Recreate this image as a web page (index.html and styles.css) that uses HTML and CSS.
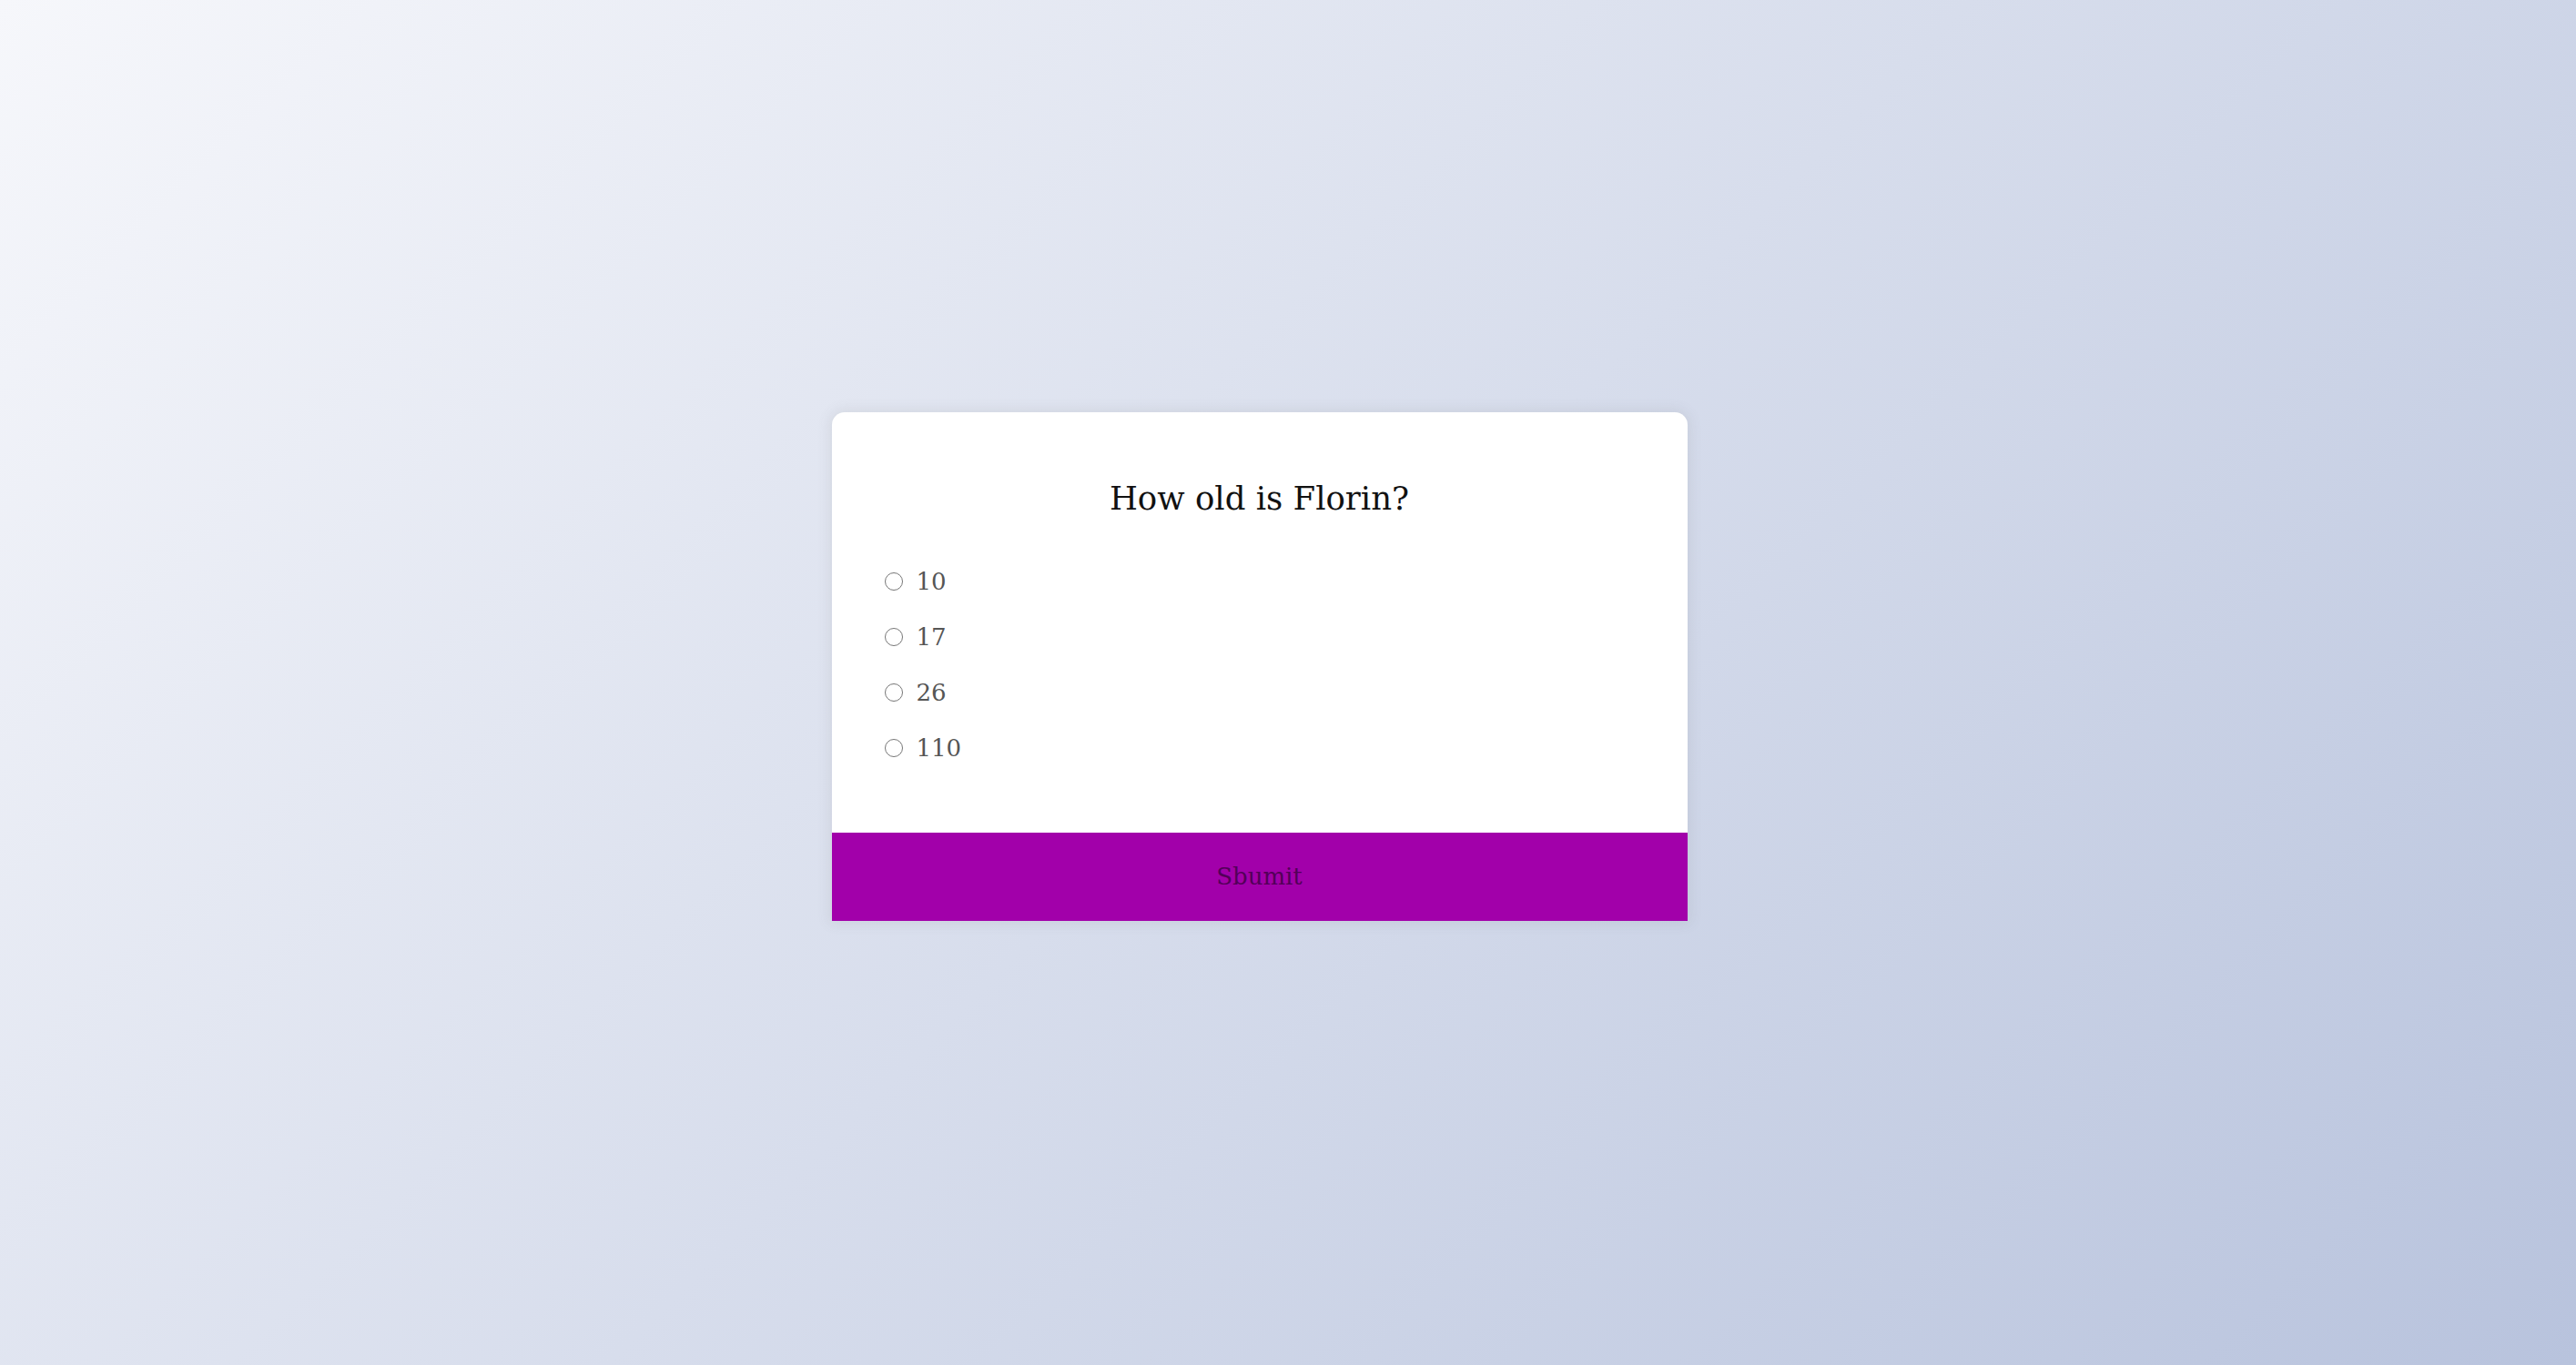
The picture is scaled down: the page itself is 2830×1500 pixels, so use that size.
FILE: index.html
```html
<!DOCTYPE html>
<html lang="en">
<head>
<meta charset="UTF-8">
<title>Quiz</title>
<link rel="stylesheet" href="styles.css">
</head>
<body>
<div class="quiz-container">
  <div class="quiz-header">
    <h2 class="question">How old is Florin?</h2>
    <ul class="answers">
      <li class="answer"><input type="radio" name="answer" id="a"><label for="a">10</label></li>
      <li class="answer"><input type="radio" name="answer" id="b"><label for="b">17</label></li>
      <li class="answer"><input type="radio" name="answer" id="c"><label for="c">26</label></li>
      <li class="answer"><input type="radio" name="answer" id="d"><label for="d">110</label></li>
    </ul>
  </div>
  <button class="submit">Sbumit</button>
</div>
</body>
</html>
```
FILE: styles.css
```css
* { box-sizing: border-box; }
html, body { margin: 0; height: 100%; }
body {
  font-family: "DejaVu Serif", serif;
  background-color: #b8c6db;
  background-image: linear-gradient(315deg, #b8c3dd 0%, #f6f7fb 100%);
  display: flex;
  align-items: center;
  justify-content: center;
  padding: 0 63px 36px 0;
  overflow: hidden;
}
.quiz-container {
  width: 940px;
  background: #fff;
  border-radius: 14px 14px 0 0;
  box-shadow: 0 0 14px 3px rgba(100, 100, 100, 0.1);
  overflow: hidden;
}
.quiz-header { padding: 74px 58px 62px; }
.question {
  margin: 0 0 40px;
  text-align: center;
  font-size: 35.5px;
  line-height: 42px;
  font-weight: normal;
  color: #111;
}
.answers { list-style: none; margin: 0; padding: 0; }
.answer {
  height: 61px;
  display: flex;
  align-items: center;
  font-size: 26px;
  color: #555;
}
.answer input {
  width: 20px;
  height: 20px;
  margin: 0 15px 0 0;
}
.submit {
  display: block;
  width: 100%;
  height: 97px;
  border: none;
  background: #a200aa;
  color: #520058;
  font-family: inherit;
  font-size: 26px;
  cursor: pointer;
}
```
